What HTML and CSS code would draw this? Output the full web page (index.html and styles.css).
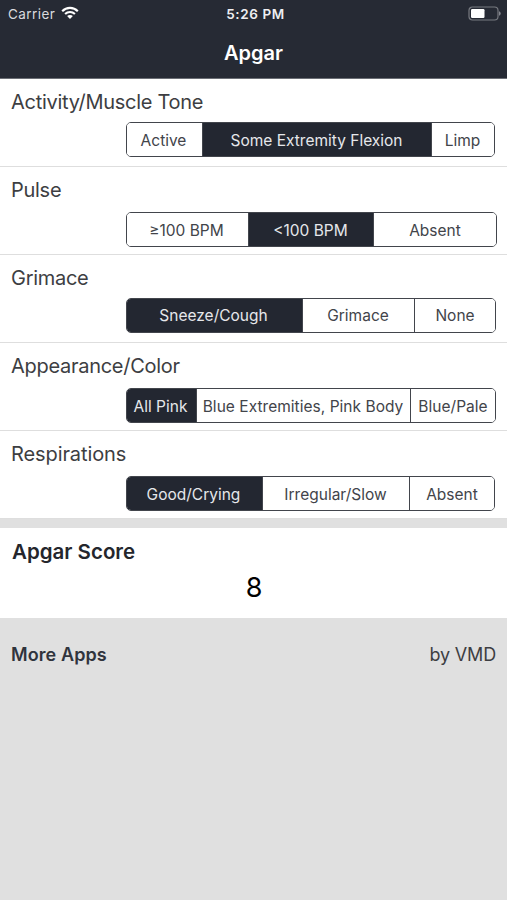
FILE: index.html
```html
<!DOCTYPE html>
<html lang="en">
<head>
<meta charset="utf-8">
<title>Apgar</title>
<link rel="stylesheet" href="styles.css">
</head>
<body>
<header class="header">
  <div class="status">
    <div class="carrier"><span>Carrier</span>
      <svg class="wifi" width="18" height="14" viewBox="0 0 18 14" fill="none" stroke="#fff" stroke-width="2.1">
        <path d="M1.2 5.2C5.6.7 12.4.7 16.8 5.2"/>
        <path d="M4.1 8.1C6.9 5.3 11.1 5.3 13.9 8.1"/>
        <path d="M9 13L6.1 10.1C7.7 8.6 10.3 8.6 11.9 10.1Z" fill="#fff" stroke="none"/>
      </svg>
    </div>
    <span class="time">5:26 PM</span>
    <svg class="battery" width="33" height="15" viewBox="0 0 33 15">
      <rect x="1" y="1" width="29" height="13" rx="3.5" fill="none" stroke="#777a80" stroke-width="1.2"/>
      <rect x="3" y="3" width="13.5" height="9" rx="1.2" fill="#fff"/>
      <path d="M31 5.2q1.7.6 1.7 2.3t-1.7 2.3z" fill="#858890"/>
    </svg>
  </div>
  <h1 class="title">Apgar</h1>
</header>
<main>
  <section class="row">
    <h2 class="label">Activity/Muscle Tone</h2>
    <div class="segments activity"><button>Active</button><button class="on">Some Extremity Flexion</button><button>Limp</button></div>
  </section>
  <section class="row">
    <h2 class="label">Pulse</h2>
    <div class="segments pulse"><button>≥100 BPM</button><button class="on">&lt;100 BPM</button><button>Absent</button></div>
  </section>
  <section class="row">
    <h2 class="label">Grimace</h2>
    <div class="segments grimace"><button class="on">Sneeze/Cough</button><button>Grimace</button><button>None</button></div>
  </section>
  <section class="row">
    <h2 class="label">Appearance/Color</h2>
    <div class="segments color"><button class="on">All Pink</button><button>Blue Extremities, Pink Body</button><button>Blue/Pale</button></div>
  </section>
  <section class="row">
    <h2 class="label wide">Respirations</h2>
    <div class="segments respirations"><button class="on">Good/Crying</button><button>Irregular/Slow</button><button>Absent</button></div>
  </section>
  <section class="score">
    <h2 class="score-label">Apgar Score</h2>
    <output class="value">8</output>
  </section>
</main>
<footer class="footer"><span class="more">More Apps</span><span class="by">by VMD</span></footer>
</body>
</html>
```

FILE: styles.css
```css
* { box-sizing: border-box; }
body { margin: 0; min-height: 900px; background: #e0e0e0; color: #3d3e42; font-family: Inter, "Liberation Sans", sans-serif; }
h1, h2 { margin: 0; }
.header { height: 79px; background: #262a34; color: #fff; border-bottom: 1px solid #6b6e75; }
.status { height: 27px; padding: 0 6px 0 8px; display: grid; grid-template-columns: 1fr auto 1fr; align-items: center; font-size: 13.5px; }
.carrier { display: flex; align-items: center; gap: 6px; color: #d9dade; letter-spacing: .45px; }
.wifi { margin-top: -1px; }
.time { margin-left: 2px; font-weight: 600; font-size: 13.5px; letter-spacing: .6px; color: #eeeef1; }
.battery { justify-self: end; margin-top: -1px; }
.title { height: 50px; line-height: 52px; text-align: center; font-size: 20px; font-weight: 600; letter-spacing: 0; }
.row { height: 88px; padding: 11px 0 0 11px; background: #fff; border-bottom: 1px solid #dedede; }
.label { height: 24px; line-height: 24px; font-size: 20px; font-weight: 400; letter-spacing: -.28px; }
.label.wide { letter-spacing: -.1px; }
.segments { display: grid; height: 35px; margin: 8px 0 0 115px; border: 1px solid #42454c; border-radius: 5px; overflow: hidden; }
.segments button { padding: 1px 1px 0 0; border: 0; border-left: 1px solid #42454c; background: #fff; color: #42444a; font: 400 15.5px Inter, "Liberation Sans", sans-serif; white-space: nowrap; }
.segments button:first-child { padding-right: 2px; border-left: 0; }
.segments button:last-child { padding-right: 0; }
.segments .on { background: #232731; color: #e6e7eb; }
.activity { width: 369px; grid-template-columns: 75px 229px 1fr; }
.activity button:last-child { padding-right: 1px; }
.pulse { width: 371px; margin-top: 10px; grid-template-columns: 121px 125px 1fr; }
.grimace { width: 370px; grid-template-columns: 175px 112px 1fr; }
.segments.grimace button { padding-top: 0; }
.color { width: 370px; margin-top: 10px; grid-template-columns: 69px 214px 1fr; }
.color button { letter-spacing: .03px; }
.respirations { width: 369px; margin-top: 10px; grid-template-columns: 135px 147px 1fr; }
.row:last-of-type { border-bottom: 0; }
.score { height: 90px; margin-top: 9px; padding-top: 11px; background: #fff; }
.score-label { height: 26px; margin-left: 12px; line-height: 26px; font-size: 20.5px; font-weight: 600; color: #24262c; }
.value { display: block; height: 44px; line-height: 45px; padding-left: 1px; text-align: center; font-size: 27px; color: #000; }
.footer { display: flex; justify-content: space-between; padding: 24px 11px 0; font-size: 18px; line-height: 26px; }
.more { font-weight: 600; letter-spacing: .1px; color: #30343d; }
.by { letter-spacing: -.15px; }
```
